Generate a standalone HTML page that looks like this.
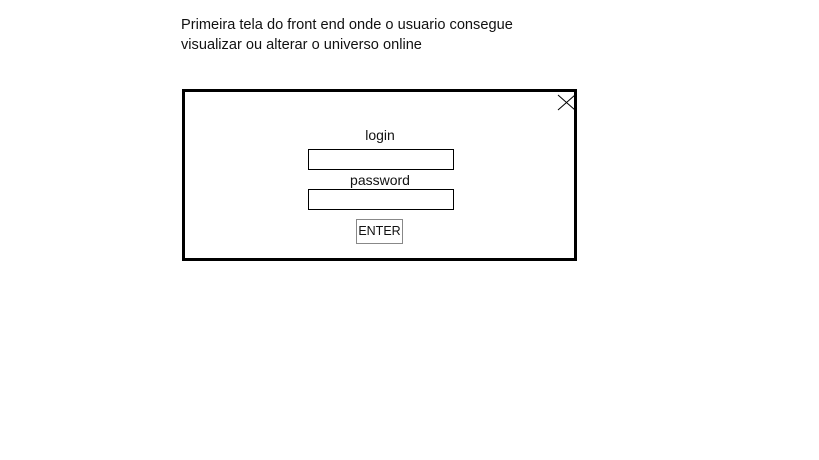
<!DOCTYPE html>
<html><head><style>
body{margin:0;width:819px;height:460px;background:#fff;position:relative;font-family:"Liberation Sans",sans-serif;color:#111;overflow:hidden}
.t{position:absolute;left:181px;font-size:14.6px;white-space:nowrap}
.box{position:absolute;left:182px;top:89px;width:389px;height:166px;border:3px solid #000}
.f{position:absolute;left:308px;width:144px;height:19px;border:1px solid #000}
.l{position:absolute;font-size:14px;width:200px;text-align:center;left:280px}
.btn{position:absolute;left:356px;top:219px;width:45px;height:23px;border:1px solid #888;font-size:12.5px;text-align:center;line-height:23px}
</style></head><body>
<div class="t" style="top:17px">Primeira tela do front end onde o usuario consegue</div>
<div class="t" style="top:37px">visualizar ou alterar o universo online</div>
<div class="box"></div>
<svg style="position:absolute;left:557px;top:94px" width="19" height="17"><path d="M1 1L18 16M1 16L18 1" stroke="#000" stroke-width="1"/></svg>
<div class="l" style="top:127px">login</div>
<div class="f" style="top:149px"></div>
<div class="l" style="top:172px">password</div>
<div class="f" style="top:189px"></div>
<div class="btn">ENTER</div>
</body></html>
